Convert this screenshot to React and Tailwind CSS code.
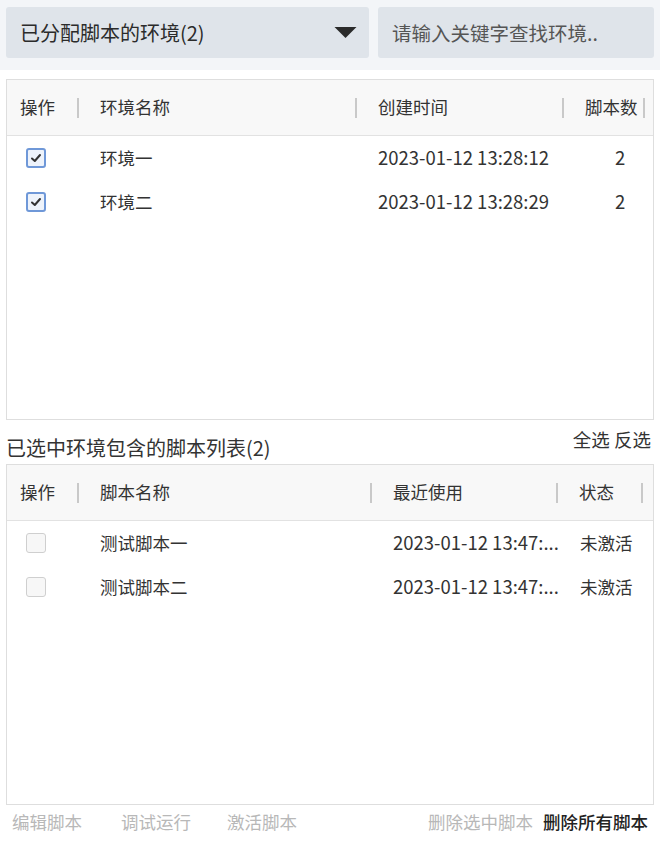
const envs = [
    { id: 1, name: '环境一', created: '2023-01-12 13:28:12', count: 2 },
    { id: 2, name: '环境二', created: '2023-01-12 13:28:29', count: 2 },
];

const scripts = [
    { id: 1, name: '测试脚本一', used: '2023-01-12 13:47:...', status: '未激活' },
    { id: 2, name: '测试脚本二', used: '2023-01-12 13:47:...', status: '未激活' },
];

function Checkbox({ checked }) {
    if (checked) {
        return (
            <span className="flex h-[20px] w-[20px] items-center justify-center rounded-[3px] border-2 border-[#6f98d8] bg-[#eef3fb]">
                <svg viewBox="0 0 12 12" className="h-[12px] w-[12px]">
                    <path d="M2 6.5 L4.8 9 L10 3" fill="none" stroke="#333" strokeWidth="2" strokeLinecap="round" strokeLinejoin="round" />
                </svg>
            </span>
        );
    }
    return <span className="block h-[20px] w-[20px] rounded-[3px] border border-[#cfcfcf] bg-[#f7f7f7]" />;
}

function Sep() {
    return <span className="h-[20px] w-[2px] shrink-0 bg-[#c9c9c9]" />;
}

export default function App() {
    return (
        <div className="h-[843px] w-[660px] bg-white text-[17.5px] text-[#333]" style={{ fontFamily: '"Noto Sans CJK SC", "Noto Sans", sans-serif' }}>
            <div className="flex h-[70px] gap-[9px] bg-[#f3f5f8] px-[6px] pt-[7px]">
                <div className="flex h-[51px] w-[363px] items-center justify-between rounded-[3px] bg-[#dfe4ea] pl-[14px] pr-[12px]">
                    <span className="whitespace-nowrap text-[20px] text-[#2b2b2b]">已分配脚本的环境(2)</span>
                    <svg viewBox="0 0 24 12" className="h-[11px] w-[23px]">
                        <path d="M0 0 H24 L12 12 Z" fill="#2b2b2b" />
                    </svg>
                </div>
                <div className="flex h-[51px] flex-1 items-center whitespace-nowrap rounded-[3px] bg-[#dfe4ea] pl-[14px] text-[19.5px] text-[#555]">
                    请输入关键字查找环境..
                </div>
            </div>

            <div className="mx-[6px] mt-[9px] flex h-[341px] flex-col border border-[#dedede]">
                <div className="flex h-[56px] items-center whitespace-nowrap border-b border-[#e2e2e2] bg-[#f8f8f8] text-[#333]">
                    <span className="w-[70px] pl-[13px]">操作</span>
                    <Sep />
                    <span className="w-[276px] pl-[21px]">环境名称</span>
                    <Sep />
                    <span className="w-[205px] pl-[21px]">创建时间</span>
                    <Sep />
                    <span className="w-[79px] pl-[21px]">脚本数</span>
                    <Sep />
                </div>
                {envs.map((env) => (
                    <div key={env.id} className="flex h-[44px] items-center whitespace-nowrap">
                        <span className="w-[72px] pl-[19px]">
                            <Checkbox checked />
                        </span>
                        <span className="w-[278px] pl-[21px]">{env.name}</span>
                        <span className="w-[207px] pl-[21px] text-[18.5px]">{env.created}</span>
                        <span className="pl-[51px] text-[18.5px]">{env.count}</span>
                    </div>
                ))}
            </div>

            <div className="mx-[6px] flex h-[44px] items-start justify-between whitespace-nowrap">
                <span className="mt-[13px] text-[20px]">已选中环境包含的脚本列表(2)</span>
                <span className="mr-[3px] mt-[6px] text-[18.5px]">全选 反选</span>
            </div>

            <div className="mx-[6px] flex h-[341px] flex-col border border-[#dedede]">
                <div className="flex h-[56px] items-center whitespace-nowrap border-b border-[#e2e2e2] bg-[#f8f8f8] text-[#333]">
                    <span className="w-[70px] pl-[13px]">操作</span>
                    <Sep />
                    <span className="w-[291px] pl-[21px]">脚本名称</span>
                    <Sep />
                    <span className="w-[184px] pl-[21px]">最近使用</span>
                    <Sep />
                    <span className="w-[83px] pl-[21px]">状态</span>
                    <Sep />
                </div>
                {scripts.map((s) => (
                    <div key={s.id} className="flex h-[44px] items-center whitespace-nowrap">
                        <span className="w-[72px] pl-[19px]">
                            <Checkbox />
                        </span>
                        <span className="w-[293px] pl-[21px]">{s.name}</span>
                        <span className="w-[186px] shrink-0 pl-[21px] text-[18.5px]">{s.used}</span>
                        <span className="pl-[22px]">{s.status}</span>
                    </div>
                ))}
            </div>

            <div className="flex h-[34px] items-center whitespace-nowrap px-[12px]">
                <span className="w-[109px] text-[#b8b8b8]">编辑脚本</span>
                <span className="w-[106px] text-[#b8b8b8]">调试运行</span>
                <span className="text-[#b8b8b8]">激活脚本</span>
                <span className="ml-auto mr-[2px] text-[#b8b8b8]">删除选中脚本</span>
                <span className="ml-[8px] font-medium text-[#222]">删除所有脚本</span>
            </div>
        </div>
    );
}
